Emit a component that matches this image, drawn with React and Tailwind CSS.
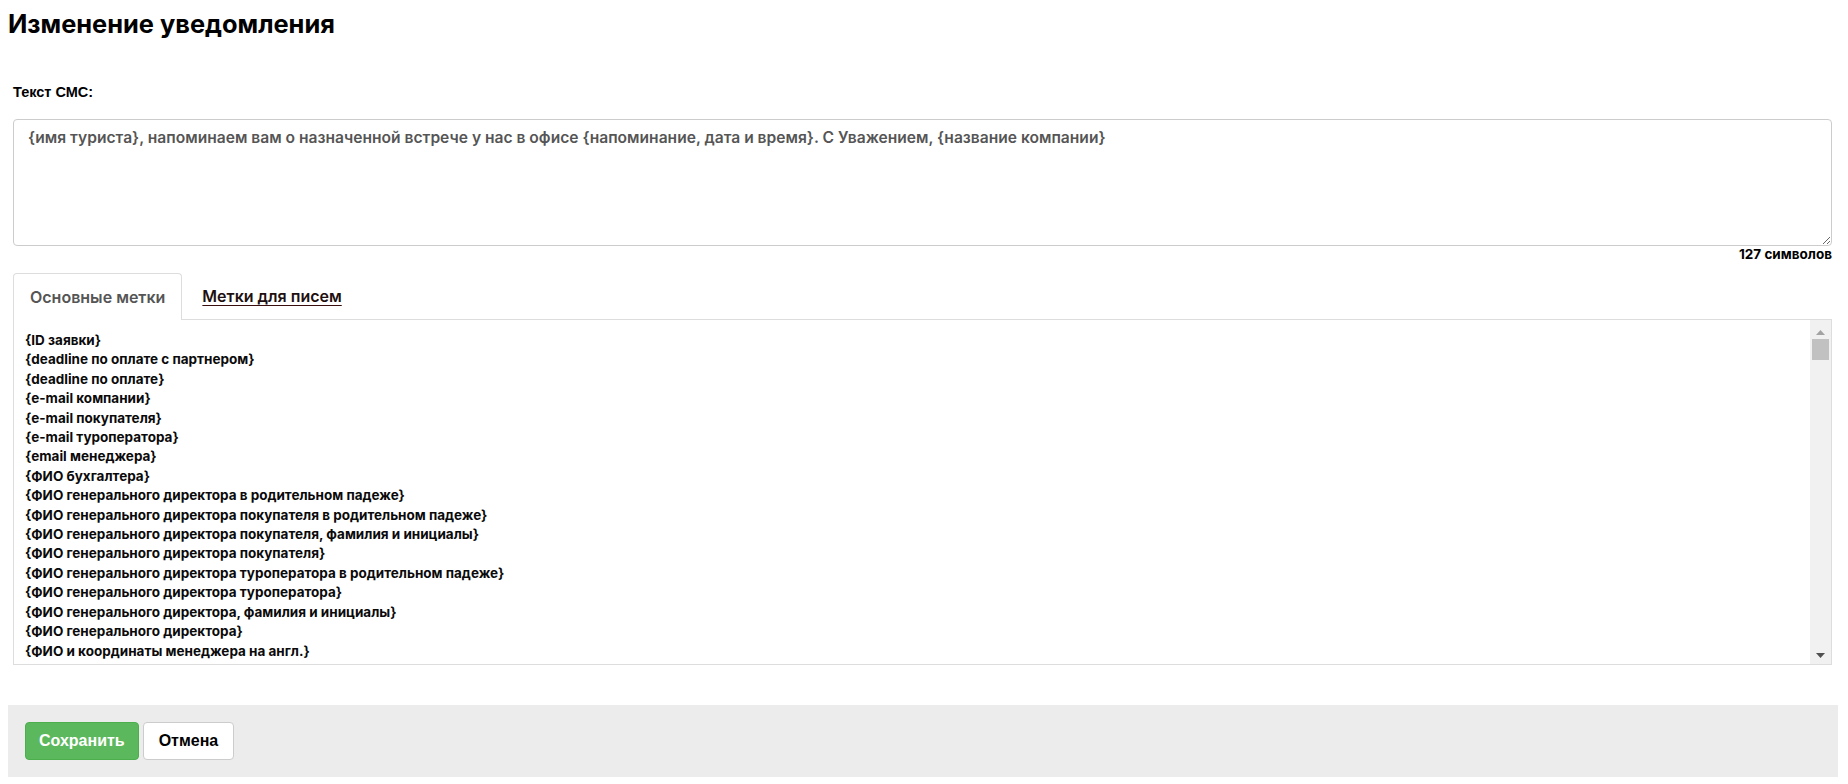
import React, { useState } from "react";

const smsText =
  "{имя туриста}, напоминаем вам о назначенной встрече у нас в офисе {напоминание, дата и время}. С Уважением, {название компании}";

const tags = [
  "{ID заявки}",
  "{deadline по оплате с партнером}",
  "{deadline по оплате}",
  "{e-mail компании}",
  "{e-mail покупателя}",
  "{e-mail туроператора}",
  "{email менеджера}",
  "{ФИО бухгалтера}",
  "{ФИО генерального директора в родительном падеже}",
  "{ФИО генерального директора покупателя в родительном падеже}",
  "{ФИО генерального директора покупателя, фамилия и инициалы}",
  "{ФИО генерального директора покупателя}",
  "{ФИО генерального директора туроператора в родительном падеже}",
  "{ФИО генерального директора туроператора}",
  "{ФИО генерального директора, фамилия и инициалы}",
  "{ФИО генерального директора}",
  "{ФИО и координаты менеджера на англ.}",
  "{ФИО и координаты менеджера на англ. без должности и подписи}",
];

const App = () => {
  const [text, setText] = useState(smsText);
  const [tab, setTab] = useState("main");

  return (
    <div className="min-h-screen bg-white pl-2 pr-[10px] pt-2 font-['Inter',sans-serif] text-[#111]">
      <h1 className="text-[25.4px] font-bold leading-[32px] text-black">
        Изменение уведомления
      </h1>

      <div className="pl-[5px] pr-[6px]">
        <div className="mt-[42px] font-['Liberation_Sans',Arial,sans-serif] text-[14.5px] font-bold leading-5 text-black">
          Текст СМС:
        </div>

        <textarea
          value={text}
          onChange={(e) => setText(e.target.value)}
          className="mt-[17px] block h-[127px] w-full rounded-[4px] border border-[#ccc] px-[14px] py-2 text-[15.6px] font-semibold leading-5 text-[#555] outline-none"
        />
        <div className="text-right text-[13.5px] font-bold leading-4 text-black">
          {text.length} символов
        </div>

        <div className="mt-[11px] flex items-end">
          <button
            onClick={() => setTab("main")}
            className="-mb-px h-[47px] rounded-t-[4px] border border-b-0 border-[#ddd] bg-white px-[16px] text-[16px] font-semibold text-[#555]"
          >
            Основные метки
          </button>
          <button
            onClick={() => setTab("mail")}
            className="ml-[2px] h-[46px] px-[18px] text-[16px] font-semibold text-[#1e1010] underline decoration-[#3a0d0d] underline-offset-[3px]"
          >
            Метки для писем
          </button>
        </div>

        <div className="flex h-[346px] border border-[#ddd] bg-white">
          <ul className="flex-1 overflow-hidden pl-[11px] pt-[11px] text-[13.5px] font-bold leading-[19.4px] text-[#0a0a0a]">
            {tags.map((t) => (
              <li key={t} className="whitespace-nowrap">
                {t}
              </li>
            ))}
          </ul>
          <div className="flex w-[21px] flex-col items-center bg-[#f1f1f1] pb-[6px] pt-[10px]">
            <svg width="9" height="5" viewBox="0 0 9 5">
              <path d="M0 5 L4.5 0 L9 5 Z" fill="#a3a3a3" />
            </svg>
            <div className="mt-[4px] h-[21px] w-[17px] bg-[#c1c1c1]" />
            <div className="flex-1" />
            <svg width="9" height="5" viewBox="0 0 9 5">
              <path d="M0 0 L9 0 L4.5 5 Z" fill="#505050" />
            </svg>
          </div>
        </div>
      </div>

      <div className="mt-10 flex h-[72px] items-start gap-[4px] bg-[#ececec] pl-[17px] pt-[17px] font-['Liberation_Sans',Arial,sans-serif]">
        <button className="h-[38px] rounded-[4px] border border-[#4cae4c] bg-[#5cb85c] px-[13px] text-[16px] font-bold text-white">
          Сохранить
        </button>
        <button className="h-[38px] rounded-[4px] border border-[#ccc] bg-white px-[15px] text-[16px] font-bold text-black">
          Отмена
        </button>
      </div>
    </div>
  );
};

export default App;
